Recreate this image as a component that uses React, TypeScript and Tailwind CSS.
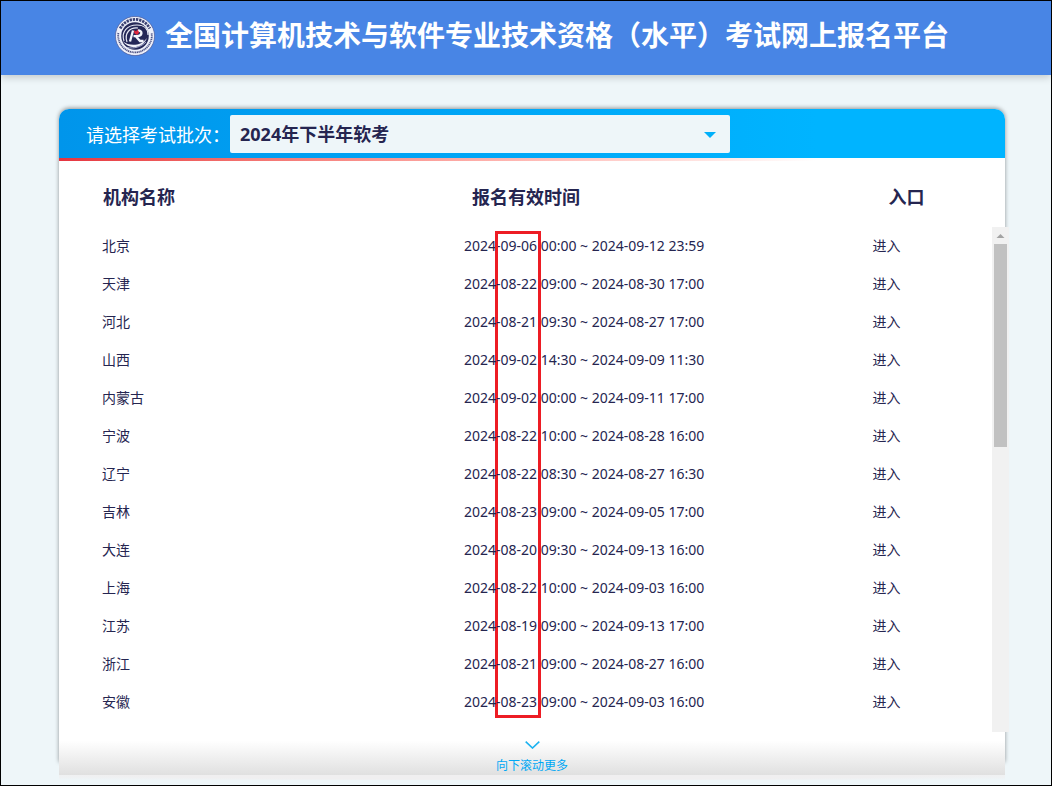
const rows = [
  ["北京", "2024-09-06 00:00 ~ 2024-09-12 23:59"],
  ["天津", "2024-08-22 09:00 ~ 2024-08-30 17:00"],
  ["河北", "2024-08-21 09:30 ~ 2024-08-27 17:00"],
  ["山西", "2024-09-02 14:30 ~ 2024-09-09 11:30"],
  ["内蒙古", "2024-09-02 00:00 ~ 2024-09-11 17:00"],
  ["宁波", "2024-08-22 10:00 ~ 2024-08-28 16:00"],
  ["辽宁", "2024-08-22 08:30 ~ 2024-08-27 16:30"],
  ["吉林", "2024-08-23 09:00 ~ 2024-09-05 17:00"],
  ["大连", "2024-08-20 09:30 ~ 2024-09-13 16:00"],
  ["上海", "2024-08-22 10:00 ~ 2024-09-03 16:00"],
  ["江苏", "2024-08-19 09:00 ~ 2024-09-13 17:00"],
  ["浙江", "2024-08-21 09:00 ~ 2024-08-27 16:00"],
  ["安徽", "2024-08-23 09:00 ~ 2024-09-03 16:00"],
];

function Logo() {
  return (
    <svg className="h-10 w-10 shrink-0" viewBox="0 0 40 40" aria-hidden="true">
      <circle cx="20" cy="20" r="19.6" fill="#eef0fa" stroke="#4d5a98" strokeWidth="0.7" />
      <path d="M5.2 12.5A16.6 16.6 0 0 1 34.8 12.5" fill="none" stroke="#3c4172" strokeWidth="2.8" strokeDasharray="2.3 0.9" />
      <path d="M3.4 17A16.8 16.8 0 1 0 36.6 17" fill="none" stroke="#4c5284" strokeWidth="1.8" strokeDasharray="1.2 0.6" />
      <circle cx="20" cy="20" r="13.8" fill="#252858" />
      <path d="M9 25C6 16 12 9 22 9C29 9 33 13 33 19" fill="none" stroke="#e9ebf6" strokeWidth="1.1" />
      <path d="M12 26C9 17 15 11 23 12" fill="none" stroke="#e9ebf6" strokeWidth="1.2" />
      <path d="M7.5 25C15 31 26 30 32 22C28 32 15 35 7.5 25Z" fill="#f1f2fa" />
      <path d="M12 31.5C19 33 26 31 31 26" fill="none" stroke="#b9bedb" strokeWidth="0.9" />
      <path d="M18 14.5L15 25.5M18.5 20.2H22C27.5 20 28 14.5 23 14.5M21 20.5L25 25H28.5" fill="none" stroke="#f3f4fb" strokeWidth="2.3" />
      <path d="M19 14L21.2 15.6L22.4 13.2L24.2 16.6L22 19L19.3 17.2Z" fill="#e1263c" />
    </svg>
  );
}

function ScrollTrack() {
  return (
    <div className="mt-[66px] -mr-1 flex w-[17px] shrink-0 flex-col items-center bg-[#f1f1f1]" aria-hidden="true">
      <svg className="h-[17px] w-[17px]" viewBox="0 0 17 17">
        <path d="M4.5 11L8.5 7L12.5 11Z" fill="#a3a3a3" />
      </svg>
      <div className="h-[203px] w-[13px] bg-[#c1c1c1]" />
    </div>
  );
}

export default function App() {
  return (
    <div className="flex min-h-screen flex-col border border-black bg-[#eef6f9] font-['Noto_Sans','Noto_Sans_CJK_SC',sans-serif] text-[#252550]">
      <header className="flex h-[74px] items-center justify-center bg-[#4885e5] pr-2 pb-1 pl-5 shadow-[0_2px_8px_rgba(0,0,0,0.2)]">
        <Logo />
        <h1 className="ml-2.5 pb-0.5 text-[28px] leading-10 font-bold whitespace-nowrap text-white">
          全国计算机技术与软件专业技术资格（水平）考试网上报名平台
        </h1>
      </header>

      <main className="mt-[34px] mr-[46px] ml-[58px]">
        <section className="rounded-t-[10px] bg-white pb-[31px] shadow-[0_-1px_4px_rgba(0,0,0,0.4)]">
          <div className="flex h-[49px] items-center rounded-t-[10px] bg-linear-to-r from-[#0095eb] to-[#00b4ff] to-80% pl-[27px]">
            <label htmlFor="batch" className="pt-0.5 text-[18px] leading-6 whitespace-nowrap text-white">
              请选择考试批次：
            </label>
            <div className="relative w-[500px]">
              <select
                id="batch"
                className="block h-[38px] w-full appearance-none rounded-xs bg-[#eef6f9] px-2.5 text-[18px] leading-6 font-bold text-[#252550]"
              >
                <option>2024年下半年软考</option>
              </select>
              <svg className="pointer-events-none absolute top-4 right-3.5 h-[7px] w-3" viewBox="0 0 12 7" aria-hidden="true">
                <path d="M0 1H12L6 7Z" fill="#00b0fa" />
              </svg>
            </div>
          </div>
          <div className="h-[3px] bg-linear-to-r from-[#e53440] to-white to-80%" />

          <div className="flex">
            <table className="flex-1 table-fixed border-collapse text-left">
              <colgroup>
                <col className="w-[43.4%]" />
                <col className="w-[43.8%]" />
                <col />
              </colgroup>
              <thead>
                <tr className="h-[66px] text-[18px] leading-6">
                  <th scope="col" className="pt-1.5 pl-11 font-bold">机构名称</th>
                  <th scope="col" className="pt-1.5 pl-2 font-bold">报名有效时间</th>
                  <th scope="col" className="pt-1.5 pl-4 font-bold">入口</th>
                </tr>
              </thead>
              <tbody>
                {rows.map(([name, period], index) => (
                  <tr key={name} className="h-[38px] text-[14px] leading-5">
                    <td className="pl-[43px]">{name}</td>
                    <td className="relative whitespace-nowrap">
                      {period}
                      {index === 0 && (
                        <span className="pointer-events-none absolute top-1 left-[31px] h-[487px] w-[46px] border-3 border-[#ed1c24]" />
                      )}
                    </td>
                    <td>
                      <a href="#enter">进入</a>
                    </td>
                  </tr>
                ))}
              </tbody>
              <tfoot>
                <tr className="h-[11px]">
                  <td colSpan={3} />
                </tr>
              </tfoot>
            </table>
            <ScrollTrack />
          </div>
        </section>

        <a href="#more" className="relative -mt-[31px] flex h-[43px] flex-col items-center bg-linear-to-b from-white from-20% to-[#e0e0e0] pt-[9px] text-[12px] leading-4 text-[#00a8f5]">
          <svg className="h-2 w-[15px]" viewBox="0 0 15 8" fill="none" stroke="#1cb2f0" strokeWidth="1.6" aria-hidden="true">
            <path d="M0.7 0.6L7.5 7L14.3 0.6" />
          </svg>
          <span className="mt-[9px]">向下滚动更多</span>
        </a>
        <div className="h-[5px] bg-[radial-gradient(ellipse_at_top,#f0eff0_60%,transparent_100%)]" />
      </main>
    </div>
  );
}
